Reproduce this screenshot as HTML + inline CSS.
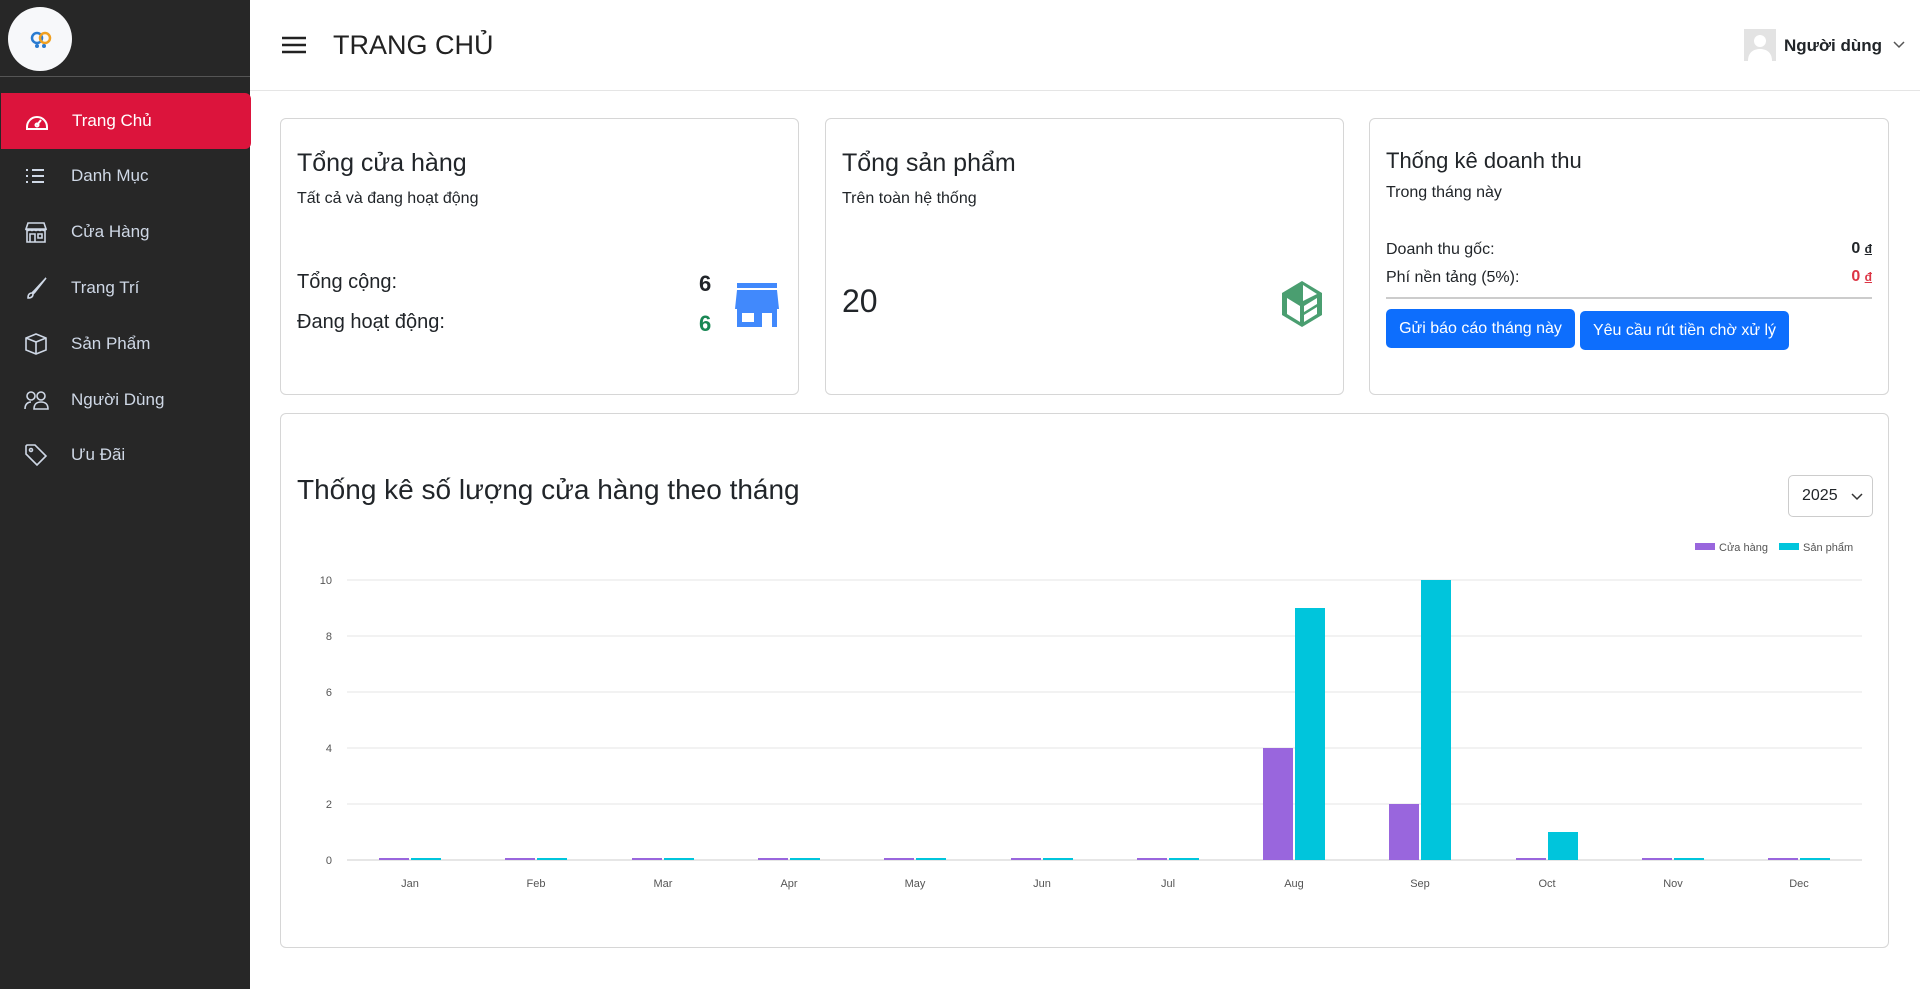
<!DOCTYPE html>
<html><head><meta charset="utf-8"><style>
*{box-sizing:border-box;margin:0;padding:0}
body{width:1920px;height:989px;overflow:hidden;background:#fff;font-family:"Liberation Sans",Arial,sans-serif;color:#212529;position:relative}
.sb{position:absolute;left:0;top:0;width:250px;height:989px;background:#272727}
.logo{position:absolute;left:8px;top:7px;width:64px;height:64px;border-radius:50%;background:#f7f8fa}
.sbline{position:absolute;left:0;top:76px;width:250px;height:1px;background:#555}
.nav{position:absolute;left:0;width:250px;height:56px;color:#cfd8e6;font-size:17px;display:flex;align-items:center}
.nav.act{background:#dc143c;color:#fff;border-radius:0 6px 6px 0;left:1px}
.nav svg{position:absolute;left:23px;width:26px;height:26px}
.nav span{position:absolute;left:71px}
.top{position:absolute;left:250px;top:0;right:0;height:91px;border-bottom:1px solid #e5e5e5}
.card{position:absolute;border:1px solid #d6d6d6;border-radius:6px;background:#fff}
.abs{position:absolute;white-space:nowrap}
.btn{position:absolute;background:#0d6efd;color:#fff;border-radius:5px;font-size:16px;display:flex;align-items:center;justify-content:center}
</style></head><body>
<div class="sb">
<div class="logo"><svg width="64" height="64" viewBox="0 0 64 64"><circle cx="29" cy="31" r="5" fill="none" stroke="#2a7bd0" stroke-width="2.5"/><circle cx="37" cy="31" r="5" fill="none" stroke="#f0a020" stroke-width="2.5"/><circle cx="29" cy="39" r="2" fill="#2a7bd0"/><circle cx="36" cy="39" r="2" fill="#2a7bd0"/></svg></div>
<div class="sbline"></div>
<div class="nav act" style="top:93px"><svg viewBox="0 0 26 26" fill="none" stroke="#fff" stroke-width="2"><path d="M3 19a10 10 0 1 1 20 0v2H3z"/><path d="M13 17l4-5"/><circle cx="13" cy="17" r="1.5"/></svg><span>Trang Chủ</span></div>
<div class="nav" style="top:148px"><svg viewBox="0 0 26 26" fill="none" stroke="#cfd8e6" stroke-width="2"><path d="M9 7h12M9 13h12M9 19h12M3 7h2M3 13h2M3 19h2"/></svg><span>Danh Mục</span></div>
<div class="nav" style="top:204px"><svg viewBox="0 0 26 26" fill="none" stroke="#cfd8e6" stroke-width="1.6"><path d="M3 10l2-6h16l2 6zM3 10c0 2 4 2 4 0c0 2 4 2 4 0c0 2 4 2 4 0c0 2 4 2 4 0c0 2 4 2 4 0M4 12v11h18V12M7 23v-8h5v8M15 15h4v4h-4z"/></svg><span>Cửa Hàng</span></div>
<div class="nav" style="top:260px"><svg viewBox="0 0 26 26" fill="none" stroke="#cfd8e6" stroke-width="1.6"><path d="M23 3L11 16l-2 2c-3 0-4 2-4 5c3 0 5-1 5-4l2-2L23 3z"/></svg><span>Trang Trí</span></div>
<div class="nav" style="top:316px"><svg viewBox="0 0 26 26" fill="none" stroke="#cfd8e6" stroke-width="1.6"><path d="M13 3l10 4v12l-10 4l-10-4V7zM3 7l10 4l10-4M13 11v12"/></svg><span>Sản Phẩm</span></div>
<div class="nav" style="top:372px"><svg viewBox="0 0 26 26" fill="none" stroke="#cfd8e6" stroke-width="1.6"><circle cx="8" cy="9" r="4"/><circle cx="18" cy="9" r="4"/><path d="M2 22c0-5 3-7 6-7M11 22c0-5 3-7 7-7s7 2 7 7z"/></svg><span>Người Dùng</span></div>
<div class="nav" style="top:427px"><svg viewBox="0 0 26 26" fill="none" stroke="#cfd8e6" stroke-width="1.6"><path d="M3 4v8l11 11l9-9L12 3H4z"/><circle cx="8" cy="8" r="1.5"/></svg><span>Ưu Đãi</span></div>
</div>
<div class="top"></div>
<svg class="abs" style="left:282px;top:36px" width="24" height="18"><path d="M0 2h24M0 9h24M0 16h24" stroke="#222" stroke-width="2.4"/></svg>
<div class="abs" style="left:333px;top:30px;font-size:27px;color:#222">TRANG CHỦ</div>
<div class="abs" style="left:1744px;top:29px;width:32px;height:32px;background:#e3e3e3"><svg width="32" height="32"><circle cx="16" cy="12" r="6" fill="#fff"/><path d="M4 32c0-9 6-12 12-12s12 3 12 12z" fill="#fff"/></svg></div>
<div class="abs" style="left:1784px;top:36px;font-size:17px;font-weight:bold">Người dùng</div>
<svg class="abs" style="left:1893px;top:41px" width="12" height="8"><path d="M1 1l5 5l5-5" fill="none" stroke="#555" stroke-width="1.5"/></svg>

<div class="card" style="left:280px;top:118px;width:519px;height:277px">
<div class="abs" style="left:16px;top:30px;font-size:25px">Tổng cửa hàng</div>
<div class="abs" style="left:16px;top:71px;font-size:16px">Tất cả và đang hoạt động</div>
<div class="abs" style="left:16px;top:152px;font-size:20px">Tổng cộng:</div>
<div class="abs" style="left:16px;top:192px;font-size:20px">Đang hoạt động:</div>
<div class="abs" style="left:418px;top:152px;font-size:22px;font-weight:bold">6</div>
<div class="abs" style="left:418px;top:192px;font-size:22px;font-weight:bold;color:#198754">6</div>
<svg class="abs" style="left:453px;top:164px" width="46" height="44" viewBox="0 0 46 44"><rect x="3" y="0" width="40" height="5" fill="#4189fc"/><path d="M3 7h40l2 19H1z" fill="#4189fc"/><path d="M3 26h40v18h-5V30H28v14H3zM8 30v9h12v-9z" fill="#4189fc" fill-rule="evenodd"/></svg>
</div>
<div class="card" style="left:825px;top:118px;width:519px;height:277px">
<div class="abs" style="left:16px;top:30px;font-size:25px">Tổng sản phẩm</div>
<div class="abs" style="left:16px;top:71px;font-size:16px">Trên toàn hệ thống</div>
<div class="abs" style="left:16px;top:164px;font-size:32px">20</div>
<svg class="abs" style="left:451px;top:160px" width="50" height="50" viewBox="0 0 50 50"><path d="M25 2L45 14v22L25 48L5 36V14z" fill="#4a9e70"/><path d="M10 19l13 8v16l-13-8zM27 27l13-8v6l-13 8zM27 36l13-8v7l-13 8zM26 6l14 9l-14 7z" fill="#fff"/></svg>
</div>
<div class="card" style="left:1369px;top:118px;width:520px;height:277px">
<div class="abs" style="left:16px;top:29px;font-size:22px">Thống kê doanh thu</div>
<div class="abs" style="left:16px;top:65px;font-size:16px">Trong tháng này</div>
<div class="abs" style="left:16px;top:122px;font-size:16px">Doanh thu gốc:</div>
<div class="abs" style="left:16px;top:150px;font-size:16px">Phí nền tảng (5%):</div>
<div class="abs" style="right:16px;top:121px;font-size:16px;font-weight:bold">0 <u style="font-size:12px">đ</u></div>
<div class="abs" style="right:16px;top:149px;font-size:16px;font-weight:bold;color:#dc3545">0 <u style="font-size:12px">đ</u></div>
<div class="abs" style="left:16px;top:178px;width:486px;height:2px;background:#ccc"></div>
<div class="btn" style="left:16px;top:190px;width:189px;height:39px">Gửi báo cáo tháng này</div>
<div class="btn" style="left:210px;top:192px;width:209px;height:39px">Yêu cầu rút tiền chờ xử lý</div>
</div>
<div class="card" style="left:280px;top:413px;width:1609px;height:535px">
<div class="abs" style="left:16px;top:60px;font-size:28px">Thống kê số lượng cửa hàng theo tháng</div>
<div class="abs" style="left:1507px;top:61px;width:85px;height:42px;border:1px solid #ccc;border-radius:5px;font-size:16px;padding:11px 0 0 13px">2025<svg style="position:absolute;left:62px;top:17px" width="12" height="8"><path d="M1 1l5 5l5-5" fill="none" stroke="#333" stroke-width="1.5"/></svg></div>
</div>
<svg class="abs" style="left:0;top:0" width="1920" height="989">
<g font-family="Liberation Sans,Arial,sans-serif" font-size="11" fill="#555">
<rect x="1695" y="543" width="20" height="7" fill="#9966dd"/><text x="1719" y="551">Cửa hàng</text>
<rect x="1779" y="543" width="20" height="7" fill="#00c5dc"/><text x="1803" y="551">Sản phẩm</text>
<g stroke="#e4e4e4"><path d="M347 580H1862M347 636H1862M347 692H1862M347 748H1862M347 804H1862"/><path d="M347 860H1862" stroke="#ccc"/></g>
<g text-anchor="end"><text x="332" y="584">10</text><text x="332" y="640">8</text><text x="332" y="696">6</text><text x="332" y="752">4</text><text x="332" y="808">2</text><text x="332" y="864">0</text></g>
<g text-anchor="middle">
<text x="410" y="887">Jan</text><text x="536" y="887">Feb</text><text x="663" y="887">Mar</text><text x="789" y="887">Apr</text><text x="915" y="887">May</text><text x="1042" y="887">Jun</text><text x="1168" y="887">Jul</text><text x="1294" y="887">Aug</text><text x="1420" y="887">Sep</text><text x="1547" y="887">Oct</text><text x="1673" y="887">Nov</text><text x="1799" y="887">Dec</text></g>
<g fill="#9966dd">
<rect x="379" y="858" width="30" height="2"/><rect x="505" y="858" width="30" height="2"/><rect x="632" y="858" width="30" height="2"/><rect x="758" y="858" width="30" height="2"/><rect x="884" y="858" width="30" height="2"/><rect x="1011" y="858" width="30" height="2"/><rect x="1137" y="858" width="30" height="2"/><rect x="1263" y="748" width="30" height="112"/><rect x="1389" y="804" width="30" height="56"/><rect x="1516" y="858" width="30" height="2"/><rect x="1642" y="858" width="30" height="2"/><rect x="1768" y="858" width="30" height="2"/></g>
<g fill="#00c5dc">
<rect x="411" y="858" width="30" height="2"/><rect x="537" y="858" width="30" height="2"/><rect x="664" y="858" width="30" height="2"/><rect x="790" y="858" width="30" height="2"/><rect x="916" y="858" width="30" height="2"/><rect x="1043" y="858" width="30" height="2"/><rect x="1169" y="858" width="30" height="2"/><rect x="1295" y="608" width="30" height="252"/><rect x="1421" y="580" width="30" height="280"/><rect x="1548" y="832" width="30" height="28"/><rect x="1674" y="858" width="30" height="2"/><rect x="1800" y="858" width="30" height="2"/></g>
</g></svg>
</body></html>
